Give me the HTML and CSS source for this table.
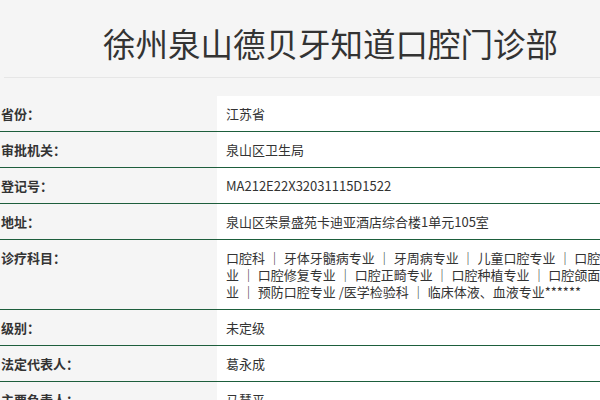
FILE: index.html
```html
<!DOCTYPE html>
<html lang="zh-CN">
<head>
<meta charset="utf-8">
<title>徐州泉山德贝牙知道口腔门诊部</title>
<link rel="stylesheet" href="styles.css">
</head>
<body>
<div class="header">
  <h1 class="title">徐州泉山德贝牙知道口腔门诊部</h1>
</div>
<table class="info">
  <tr><th>省份：</th><td>江苏省</td></tr>
  <tr><th>审批机关：</th><td>泉山区卫生局</td></tr>
  <tr><th>登记号：</th><td>MA212E22X32031115D1522</td></tr>
  <tr><th>地址：</th><td>泉山区荣景盛苑卡迪亚酒店综合楼1单元105室</td></tr>
  <tr><th>诊疗科目：</th><td><div class="wrap">口腔科 ｜ 牙体牙髓病专业 ｜ 牙周病专业 ｜ 儿童口腔专业 ｜ 口腔颌面外科专业 ｜ 口腔修复专业 ｜ 口腔正畸专业 ｜ 口腔种植专业 ｜ 口腔颌面医学影像专业 ｜ 预防口腔专业 /医学检验科 ｜ 临床体液、血液专业******</div></td></tr>
  <tr><th>级别：</th><td>未定级</td></tr>
  <tr><th>法定代表人：</th><td>葛永成</td></tr>
  <tr><th>主要负责人：</th><td>马慧平</td></tr>
</table>
</body>
</html>
```
FILE: styles.css
```css
html { overflow: hidden; }
body {
  margin: 0;
  background: #f5f5f5;
  color: #333;
  font-family: "Noto Sans CJK SC", "Noto Sans", sans-serif;
}
.header {
  margin-left: 4px;
  height: 77px;
  border-bottom: 1px solid #e6e6e6;
}
.title {
  margin: 0;
  padding: 18px 0 0 99px;
  font-size: 32.5px;
  line-height: 50px;
  font-weight: normal;
  color: #333;
  white-space: nowrap;
}
.info {
  margin-top: 18px;
  border-collapse: collapse;
  width: 690px;
  font-size: 13px;
  line-height: 17px;
}
.info th {
  width: 216px;
  text-align: left;
  vertical-align: top;
  font-weight: bold;
  padding: 9px 0 9px 1px;
  background: #f5f5f5;
  border-bottom: 1px solid #1d5e3c;
}
.info td {
  background: #fff;
  vertical-align: top;
  padding: 9px 9px;
  border-bottom: 1px solid #1d5e3c;
}
.wrap { width: 446px; }
```
